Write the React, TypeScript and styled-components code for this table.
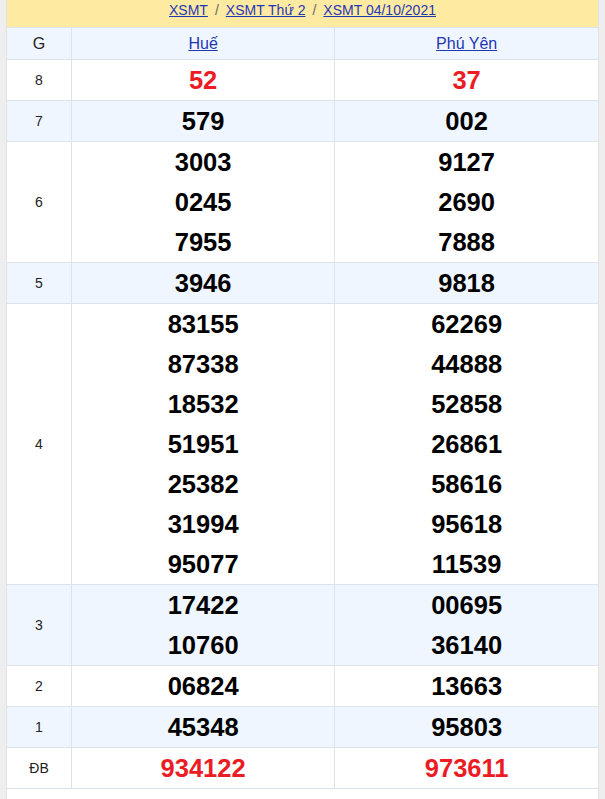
import React from "react";
import styled, { createGlobalStyle } from "styled-components";

const Global = createGlobalStyle`
  html, body { margin: 0; padding: 0; background: #eeeeee; }
  body { font-family: "Liberation Sans", Arial, sans-serif; }
`;

const Page = styled.div`
  margin: 0 6px;
  background: #fff;
  border-left: 1px solid #e2e2e2;
  border-right: 1px solid #e2e2e2;
  min-height: 799px;
  box-sizing: border-box;
`;

const Crumbs = styled.div`
  background: #ffeaa2;
  height: 28px;
  display: flex;
  align-items: center;
  justify-content: center;
  gap: 7px;
  font-size: 14px;
  color: #666;
  border-bottom: 1px solid #dde3ea;
  box-sizing: border-box;
  padding-bottom: 8px;
`;

const Link = styled.a`
  color: #1f37b4;
  text-decoration: underline;
`;

const Table = styled.table`
  width: 100%;
  border-collapse: collapse;
  table-layout: fixed;
`;

const Row = styled.tr<{ $alt?: boolean }>`
  background: ${(p) => (p.$alt ? "#eff6ff" : "#fff")};
`;

const HeadCell = styled.th<{ $w?: number }>`
  height: 31px;
  padding: 0;
  font-weight: normal;
  font-size: 16px;
  color: #222;
  border: 1px solid #dde3ea;
  border-top: none;
  text-align: center;
  ${(p) => (p.$w ? `width: ${p.$w}px;` : "")}
  &:first-child { border-left: none; }
  &:last-child { border-right: none; }
`;

const Label = styled.td`
  padding: 0;
  font-size: 14px;
  color: #222;
  text-align: center;
  border: 1px solid #dde3ea;
  border-left: none;
`;

const Cell = styled.td`
  padding: 0;
  text-align: center;
  border: 1px solid #dde3ea;
  &:last-child { border-right: none; }
`;

const Num = styled.div<{ $red?: boolean }>`
  height: 40px;
  line-height: 40px;
  font-size: 25.5px;
  font-weight: bold;
  color: ${(p) => (p.$red ? "#ec1c24" : "#000")};
`;

const rows: { g: string; a: string[]; b: string[]; red?: boolean }[] = [
  { g: "8", a: ["52"], b: ["37"], red: true },
  { g: "7", a: ["579"], b: ["002"] },
  { g: "6", a: ["3003", "0245", "7955"], b: ["9127", "2690", "7888"] },
  { g: "5", a: ["3946"], b: ["9818"] },
  {
    g: "4",
    a: ["83155", "87338", "18532", "51951", "25382", "31994", "95077"],
    b: ["62269", "44888", "52858", "26861", "58616", "95618", "11539"],
  },
  { g: "3", a: ["17422", "10760"], b: ["00695", "36140"] },
  { g: "2", a: ["06824"], b: ["13663"] },
  { g: "1", a: ["45348"], b: ["95803"] },
  { g: "ĐB", a: ["934122"], b: ["973611"], red: true },
];

export default function App() {
  return (
    <>
      <Global />
      <Page>
        <Crumbs>
          <Link href="#">XSMT</Link>
          <span>/</span>
          <Link href="#">XSMT Thứ 2</Link>
          <span>/</span>
          <Link href="#">XSMT 04/10/2021</Link>
        </Crumbs>
        <Table>
          <thead>
            <Row $alt>
              <HeadCell $w={64}>G</HeadCell>
              <HeadCell>
                <Link href="#">Huế</Link>
              </HeadCell>
              <HeadCell>
                <Link href="#">Phú Yên</Link>
              </HeadCell>
            </Row>
          </thead>
          <tbody>
            {rows.map((r, i) => (
              <Row key={r.g} $alt={i % 2 === 1}>
                <Label>{r.g}</Label>
                <Cell>
                  {r.a.map((n) => (
                    <Num key={n} $red={r.red}>
                      {n}
                    </Num>
                  ))}
                </Cell>
                <Cell>
                  {r.b.map((n) => (
                    <Num key={n} $red={r.red}>
                      {n}
                    </Num>
                  ))}
                </Cell>
              </Row>
            ))}
          </tbody>
        </Table>
      </Page>
    </>
  );
}
